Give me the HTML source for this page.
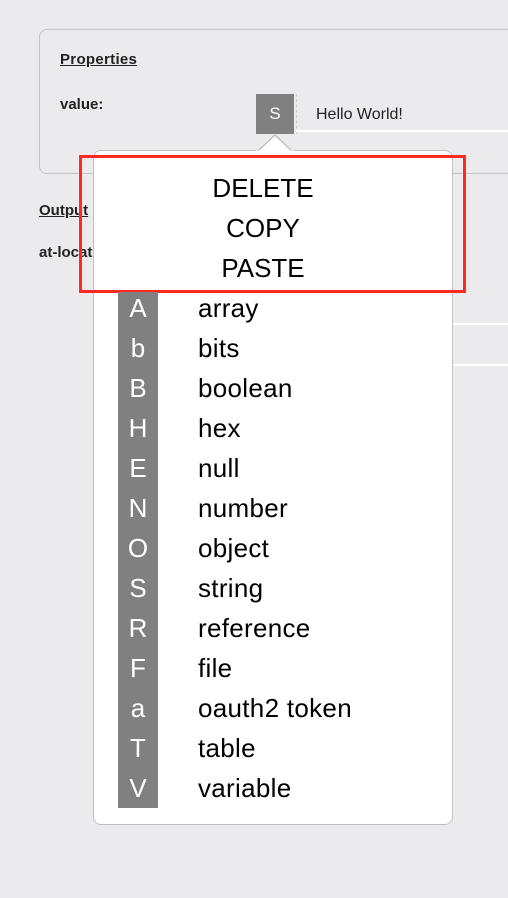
<!DOCTYPE html>
<html><head><meta charset="utf-8"><style>
html,body{margin:0;width:508px;height:898px;overflow:hidden;background:#ebebed;font-family:"Liberation Sans",sans-serif;position:relative}
.abs{position:absolute}
.props{left:39px;top:29px;width:520px;height:145px;border:1.5px solid #c4c4c6;border-radius:8px;box-sizing:border-box}
.t{font-size:15px;font-weight:bold;color:#222}
.u{text-decoration:underline}
.sbox{left:256px;top:94px;width:38px;height:40px;background:#808080;color:#fff;font-size:17px;text-align:center;line-height:40px}
.pop{left:93px;top:150px;width:360px;height:675px;background:#fff;border:1.5px solid #c0c0c0;border-radius:8px;box-sizing:border-box}
.red{left:79px;top:155px;width:387px;height:138px;border:3.5px solid #ff2a1f;box-sizing:border-box}
.m{width:340px;left:93px;text-align:center;font-size:26px;color:#000;line-height:40px}
.col{left:118px;top:292px;width:40px;height:516px;background:#808080}
.row{left:118px;height:40px;line-height:40px;font-size:26px}
.row b{font-weight:normal;color:#fff;display:inline-block;width:40px;text-align:center}
.row span{position:absolute;left:80px;color:#000;white-space:nowrap;letter-spacing:0.3px}
</style></head><body>
<div class="abs props"></div>
<div class="abs t u" style="left:60px;top:51px;letter-spacing:0.3px">Properties</div>
<div class="abs t" style="left:60px;top:96px">value:</div>
<div class="abs sbox">S</div>
<div class="abs" style="left:294px;top:94px;width:2px;height:40px;border-right:1px dashed #ccc"></div>
<div class="abs" style="left:316px;top:106px;font-size:16px;color:#222">Hello World!</div>
<div class="abs" style="left:296px;top:130px;width:212px;height:2px;background:#fff"></div>
<div class="abs t u" style="left:39px;top:202px">Output</div>
<div class="abs t" style="left:39px;top:244px">at-location</div>
<div class="abs" style="left:453px;top:323px;width:55px;height:2px;background:#fff"></div>
<div class="abs" style="left:453px;top:364px;width:55px;height:2px;background:#fff"></div>
<div class="abs pop"></div>
<svg class="abs" style="left:256px;top:134px" width="38" height="18"><path d="M2 17 L19 1 L36 17" fill="#fff" stroke="#c0c0c0" stroke-width="1.5"/><rect x="0" y="16.5" width="38" height="3" fill="#fff"/></svg>
<div class="abs m" style="top:168px">DELETE</div>
<div class="abs m" style="top:208px">COPY</div>
<div class="abs m" style="top:248px">PASTE</div>
<div class="abs red"></div>
<div class="abs col"></div>
<div class="abs row" style="top:288px"><b>A</b><span>array</span></div>
<div class="abs row" style="top:328px"><b>b</b><span>bits</span></div>
<div class="abs row" style="top:368px"><b>B</b><span>boolean</span></div>
<div class="abs row" style="top:408px"><b>H</b><span>hex</span></div>
<div class="abs row" style="top:448px"><b>E</b><span>null</span></div>
<div class="abs row" style="top:488px"><b>N</b><span>number</span></div>
<div class="abs row" style="top:528px"><b>O</b><span>object</span></div>
<div class="abs row" style="top:568px"><b>S</b><span>string</span></div>
<div class="abs row" style="top:608px"><b>R</b><span>reference</span></div>
<div class="abs row" style="top:648px"><b>F</b><span>file</span></div>
<div class="abs row" style="top:688px"><b>a</b><span>oauth2 token</span></div>
<div class="abs row" style="top:728px"><b>T</b><span>table</span></div>
<div class="abs row" style="top:768px"><b>V</b><span>variable</span></div>
</body></html>
